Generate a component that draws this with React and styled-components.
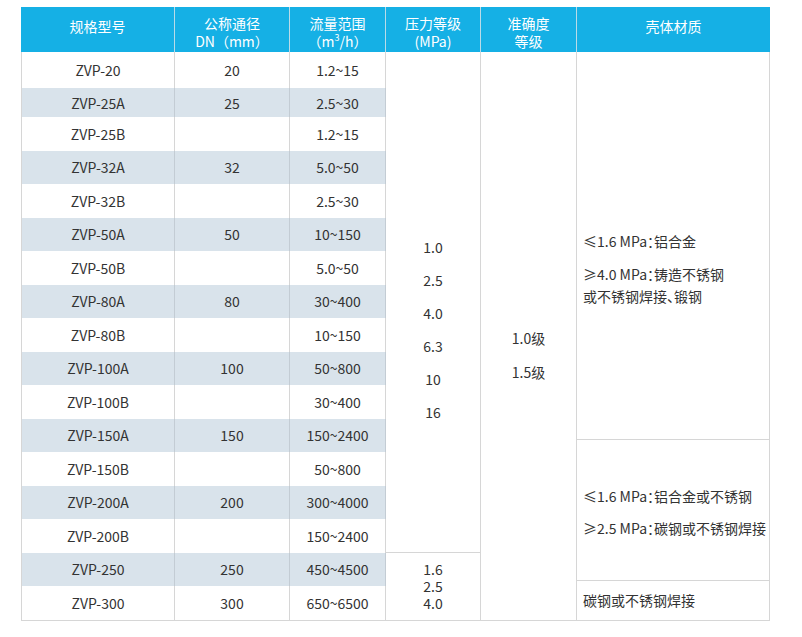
import React from "react";
import styled, { createGlobalStyle } from "styled-components";

const GlobalStyle = createGlobalStyle`
  html, body { margin: 0; padding: 0; background: #ffffff; }
  body {
    font-family: "Noto Sans CJK SC", "Noto Sans", sans-serif;
    color: #333333;
    font-size: 14px;
  }
`;

const COLS = "153px 115px 96px 95px 96px 193px";
const BORDER = "#d6d6d6";
const STRIPE = "#d9e3eb";

const Page = styled.div`
  padding: 7px 0 0 21px;
`;

const Table = styled.div`
  width: 749px;
`;

const HeaderRow = styled.div`
  display: grid;
  grid-template-columns: 154px 115px 96px 95px 96px 193px;
  height: 45px;
  background: #15b0e5;
`;

const HeaderCell = styled.div`
  display: flex;
  flex-direction: column;
  align-items: center;
  padding-top: ${(p) => (p.$single ? "10px" : "7px")};
  color: #ffffff;
  font-size: 14px;
  line-height: 18px;
  border-right: ${(p) => (p.$last ? "none" : "1px solid #b9dbe8")};
  box-sizing: border-box;
`;

const Sup = styled.sup`
  font-size: 9px;
  line-height: 0;
`;

const Body = styled.div`
  display: grid;
  grid-template-columns: ${COLS};
  grid-template-rows: 36px 29px repeat(15, 33.5px);
  border-left: 1px solid ${BORDER};
  border-bottom: 1px solid ${BORDER};
`;

const Cell = styled.div`
  grid-column: ${(p) => p.$col};
  grid-row: ${(p) => p.$row};
  display: flex;
  align-items: center;
  justify-content: center;
  border-right: 1px solid ${(p) => (p.$striped ? "#c3ccd4" : BORDER)};
  background: ${(p) => (p.$striped ? STRIPE : "#ffffff")};
  font-size: 14px;
  line-height: 20px;
  box-sizing: border-box;
`;

const SpanCell = styled.div`
  grid-column: ${(p) => p.$col};
  grid-row: ${(p) => p.$rows};
  display: flex;
  flex-direction: column;
  align-items: center;
  justify-content: ${(p) => (p.$center ? "center" : "flex-start")};
  padding-top: ${(p) => p.$pt || 0}px;
  gap: ${(p) => p.$gap || 0}px;
  border-right: 1px solid ${BORDER};
  border-bottom: ${(p) => (p.$bb ? `1px solid ${BORDER}` : "none")};
  box-sizing: border-box;
  font-size: 14px;
  line-height: ${(p) => p.$lh || 20}px;
  background: #ffffff;
`;

const MaterialCol = styled.div`
  grid-column: 6;
  grid-row: 1 / 18;
  display: flex;
  flex-direction: column;
  border-right: 1px solid ${BORDER};
  background: #ffffff;
`;

const MaterialGroup = styled.div`
  height: ${(p) => (p.$h ? `${p.$h}px` : "auto")};
  flex: ${(p) => (p.$h ? "none" : "1")};
  display: flex;
  flex-direction: column;
  justify-content: ${(p) => (p.$top ? "flex-start" : "center")};
  padding: ${(p) => p.$pt || 0}px 4px 0 6px;
  gap: ${(p) => p.$gap || 0}px;
  border-bottom: ${(p) => (p.$bb ? `1px solid ${BORDER}` : "none")};
  box-sizing: border-box;
  font-size: 14px;
  line-height: 22px;
  white-space: nowrap;
  font-feature-settings: "halt";
`;

const Para = styled.div``;

const rows = [
  ["ZVP-20", "20", "1.2~15"],
  ["ZVP-25A", "25", "2.5~30"],
  ["ZVP-25B", "", "1.2~15"],
  ["ZVP-32A", "32", "5.0~50"],
  ["ZVP-32B", "", "2.5~30"],
  ["ZVP-50A", "50", "10~150"],
  ["ZVP-50B", "", "5.0~50"],
  ["ZVP-80A", "80", "30~400"],
  ["ZVP-80B", "", "10~150"],
  ["ZVP-100A", "100", "50~800"],
  ["ZVP-100B", "", "30~400"],
  ["ZVP-150A", "150", "150~2400"],
  ["ZVP-150B", "", "50~800"],
  ["ZVP-200A", "200", "300~4000"],
  ["ZVP-200B", "", "150~2400"],
  ["ZVP-250", "250", "450~4500"],
  ["ZVP-300", "300", "650~6500"],
];

export default function App() {
  return (
    <>
      <GlobalStyle />
      <Page>
        <Table>
          <HeaderRow>
            <HeaderCell $single>规格型号</HeaderCell>
            <HeaderCell>
              <span>公称通径</span>
              <span>DN（mm）</span>
            </HeaderCell>
            <HeaderCell>
              <span>流量范围</span>
              <span>
                （m<Sup>3</Sup>/h）
              </span>
            </HeaderCell>
            <HeaderCell>
              <span>压力等级</span>
              <span>(MPa)</span>
            </HeaderCell>
            <HeaderCell>
              <span>准确度</span>
              <span>等级</span>
            </HeaderCell>
            <HeaderCell $single $last>
              壳体材质
            </HeaderCell>
          </HeaderRow>
          <Body>
            {rows.map((r, i) => {
              const striped = i % 2 === 1;
              return (
                <React.Fragment key={r[0]}>
                  <Cell $striped={striped} $col={1} $row={i + 1}>
                    {r[0]}
                  </Cell>
                  <Cell $striped={striped} $col={2} $row={i + 1}>
                    {r[1]}
                  </Cell>
                  <Cell $striped={striped} $col={3} $row={i + 1}>
                    {r[2]}
                  </Cell>
                </React.Fragment>
              );
            })}
            <SpanCell $col={4} $rows="1 / 16" $pt={185} $gap={13} $bb>
              <Para>1.0</Para>
              <Para>2.5</Para>
              <Para>4.0</Para>
              <Para>6.3</Para>
              <Para>10</Para>
              <Para>16</Para>
            </SpanCell>
            <SpanCell $col={4} $rows="16 / 18" $center $lh={17}>
              <Para>1.6</Para>
              <Para>2.5</Para>
              <Para>4.0</Para>
            </SpanCell>
            <SpanCell $col={5} $rows="1 / 18" $pt={276} $gap={14}>
              <Para>1.0级</Para>
              <Para>1.5级</Para>
            </SpanCell>
            <MaterialCol>
              <MaterialGroup $h={388} $top $pt={178} $gap={11} $bb>
                <Para>≤1.6 MPa：铝合金</Para>
                <Para>
                  ≥4.0 MPa：铸造不锈钢
                  <br />
                  或不锈钢焊接、锻钢
                </Para>
              </MaterialGroup>
              <MaterialGroup $h={141} $pt={3} $gap={10} $bb>
                <Para>≤1.6 MPa：铝合金或不锈钢</Para>
                <Para>≥2.5 MPa：碳钢或不锈钢焊接</Para>
              </MaterialGroup>
              <MaterialGroup>
                <Para>碳钢或不锈钢焊接</Para>
              </MaterialGroup>
            </MaterialCol>
          </Body>
        </Table>
      </Page>
    </>
  );
}
